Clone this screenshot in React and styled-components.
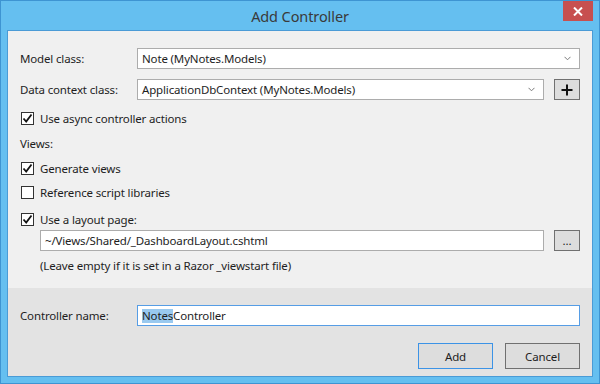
import React from "react";
import styled, { createGlobalStyle } from "styled-components";

const GlobalStyle = createGlobalStyle`
  html, body {
    margin: 0;
    padding: 0;
    background: #ffffff;
  }
  * {
    box-sizing: border-box;
  }
`;

const Frame = styled.div`
  width: 600px;
  height: 384px;
  display: flex;
  flex-direction: column;
  background: #65bff0;
  border: 1px solid #3e94d2;
  font-family: "Segoe UI", "Noto Sans", "Open Sans", sans-serif;
  font-size: 11.5px;
  letter-spacing: -0.15px;
  color: #1e1e1e;
`;

const TitleBar = styled.div`
  height: 29px;
  display: grid;
  grid-template-columns: 1fr auto 1fr;
  align-items: start;
`;

const Title = styled.div`
  grid-column: 2;
  padding-top: 5px;
  font-size: 14.5px;
  color: #3a3a3a;
  letter-spacing: -0.1px;
`;

const CloseButton = styled.div`
  grid-column: 3;
  justify-self: end;
  width: 30px;
  height: 20px;
  margin-right: 6px;
  background: #c75050;
  display: flex;
  align-items: center;
  justify-content: center;
`;

const Client = styled.div`
  flex: 1;
  margin: 0 6px 6px 6px;
  border: 1px solid #4a9bd6;
  display: flex;
  flex-direction: column;
`;

const TopSection = styled.div`
  flex: 1;
  background: #f0f0f0;
  padding: 17px 12px 0 12px;
  display: flex;
  flex-direction: column;
`;

const BottomSection = styled.div`
  height: 88px;
  background: #e3e3e3;
  padding: 17px 12px 0 12px;
  display: flex;
  flex-direction: column;
`;

const FieldRow = styled.div`
  display: grid;
  grid-template-columns: 107px 1fr 26px;
  column-gap: 10px;
  align-items: center;
  height: 21px;
  margin-top: ${(p) => p.$mt || 0}px;
`;

const Label = styled.span`
  white-space: nowrap;
`;

const Combo = styled.div`
  grid-column: ${(p) => (p.$wide ? "2 / 4" : "2")};
  height: 21px;
  background: #ffffff;
  border: 1px solid #acacac;
  display: flex;
  align-items: center;
  justify-content: space-between;
  padding: 0 8px 0 4px;
`;

const TextBox = styled.div`
  grid-column: ${(p) => p.$span || "auto"};
  height: 21px;
  background: #ffffff;
  border: 1px solid ${(p) => (p.$focused ? "#569de5" : "#acacac")};
  display: flex;
  align-items: center;
  padding: 0 4px;
  white-space: nowrap;
`;

const Selected = styled.span`
  background: #99c9ef;
  line-height: 14px;
`;

const SmallButton = styled.div`
  height: 21px;
  background: #dddddd;
  border: 1px solid #707070;
  display: flex;
  align-items: center;
  justify-content: center;
`;

const CheckRow = styled.label`
  display: flex;
  align-items: center;
  gap: 6px;
  height: 16px;
  margin-top: ${(p) => p.$mt || 0}px;
  padding-left: 1px;
`;

const Box = styled.span`
  width: 13px;
  height: 13px;
  background: #ffffff;
  border: 1px solid #333333;
  display: flex;
  align-items: center;
  justify-content: center;
`;

const TextRow = styled.div`
  height: 16px;
  display: flex;
  align-items: center;
  margin-top: ${(p) => p.$mt || 0}px;
  padding-left: ${(p) => p.$indent || 0}px;
`;

const PathRow = styled.div`
  display: grid;
  grid-template-columns: 1fr 26px;
  column-gap: 10px;
  margin-top: 3px;
  padding-left: 20px;
`;

const ButtonBar = styled.div`
  display: flex;
  justify-content: flex-end;
  gap: 12px;
  margin-top: 17px;
`;

const DialogButton = styled.div`
  width: 75px;
  height: 26px;
  background: #dddddd;
  border: 1px solid ${(p) => (p.$default ? "#3c93e6" : "#707070")};
  display: flex;
  align-items: center;
  justify-content: center;
`;

const Chevron = () => (
  <svg width="7" height="5" viewBox="0 0 7 5">
    <path d="M0.5 0.8 L3.5 3.8 L6.5 0.8" fill="none" stroke="#7a7a7a" strokeWidth="1" />
  </svg>
);

const Check = () => (
  <svg width="11" height="11" viewBox="0 0 11 11">
    <path d="M1.5 5.5 L4.2 8.5 L9.5 1.5" fill="none" stroke="#111" strokeWidth="1.8" />
  </svg>
);

const Checkbox = ({ checked, children, mt }) => (
  <CheckRow $mt={mt}>
    <Box>{checked && <Check />}</Box>
    <span>{children}</span>
  </CheckRow>
);

export default function App() {
  return (
    <>
      <GlobalStyle />
      <Frame>
        <TitleBar>
          <Title>Add Controller</Title>
          <CloseButton>
            <svg width="10" height="9" viewBox="0 0 10 9">
              <path d="M1 0.5 L9 8.5 M9 0.5 L1 8.5" stroke="#fff" strokeWidth="2" />
            </svg>
          </CloseButton>
        </TitleBar>
        <Client>
          <TopSection>
            <FieldRow>
              <Label>Model class:</Label>
              <Combo $wide>
                <span>Note (MyNotes.Models)</span>
                <Chevron />
              </Combo>
            </FieldRow>
            <FieldRow $mt={10}>
              <Label>Data context class:</Label>
              <Combo>
                <span>ApplicationDbContext (MyNotes.Models)</span>
                <Chevron />
              </Combo>
              <SmallButton>
                <svg width="12" height="12" viewBox="0 0 12 12">
                  <path d="M6 0.5 V11.5 M0.5 6 H11.5" stroke="#111" strokeWidth="2" />
                </svg>
              </SmallButton>
            </FieldRow>
            <Checkbox checked mt={10}>Use async controller actions</Checkbox>
            <TextRow $mt={9}>Views:</TextRow>
            <Checkbox checked mt={9}>Generate views</Checkbox>
            <Checkbox mt={8}>Reference script libraries</Checkbox>
            <Checkbox checked mt={11}>Use a layout page:</Checkbox>
            <PathRow>
              <TextBox>~/Views/Shared/_DashboardLayout.cshtml</TextBox>
              <SmallButton>...</SmallButton>
            </PathRow>
            <TextRow $mt={6} $indent={20}>
              (Leave empty if it is set in a Razor _viewstart file)
            </TextRow>
          </TopSection>
          <BottomSection>
            <FieldRow>
              <Label>Controller name:</Label>
              <TextBox $focused $span="2 / 4">
                <Selected>Notes</Selected>Controller
              </TextBox>
            </FieldRow>
            <ButtonBar>
              <DialogButton $default>Add</DialogButton>
              <DialogButton>Cancel</DialogButton>
            </ButtonBar>
          </BottomSection>
        </Client>
      </Frame>
    </>
  );
}
